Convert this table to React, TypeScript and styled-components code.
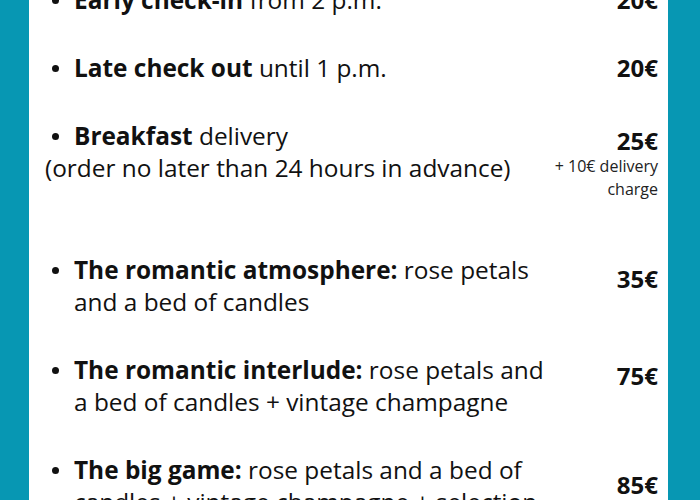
import styled, { createGlobalStyle } from "styled-components";

const GlobalStyle = createGlobalStyle`
  html, body {
    margin: 0;
    padding: 0;
    background: #0797b3;
  }
  body {
    font-family: "Open Sans", "Liberation Sans", sans-serif;
    color: #111111;
  }
`;

const Panel = styled.main`
  background: #ffffff;
  margin: 0 32px 0 29px;
  height: 500px;
  overflow: hidden;
  padding: 0 10px 0 16px;
  box-sizing: border-box;
`;

const Content = styled.div`
  display: flex;
  flex-direction: column;
  gap: 53px;
  margin-top: -16px;
`;

const Section = styled.section`
  display: flex;
  flex-direction: column;
  gap: 36px;
`;

const Row = styled.div`
  display: grid;
  grid-template-columns: 1fr 106px;
  align-items: start;
`;

const Description = styled.div`
  font-size: 24.4px;
  line-height: 32px;
`;

const Item = styled.p`
  position: relative;
  margin: 0;
  padding-left: 29px;

  &::before {
    content: "";
    position: absolute;
    left: 7px;
    top: 13px;
    width: 7px;
    height: 7px;
    border-radius: 50%;
    background: #111111;
  }

  b {
    font-weight: 700;
  }
`;

const Note = styled.p`
  margin: 0;
`;

const PriceBox = styled.div<{ $offset: number }>`
  padding-top: ${({ $offset }) => $offset}px;
  text-align: right;
`;

const Price = styled.div`
  font-weight: 700;
  font-size: 24px;
  line-height: 28px;
`;

const PriceNote = styled.div`
  font-size: 16px;
  line-height: 23px;
  color: #222222;
`;

type Extra = {
  bold: string;
  text: string;
  price: string;
  offset: number;
  note?: string;
  priceNote?: string;
};

const basics: Extra[] = [
  { bold: "Early check-in", text: " from 2 p.m.", price: "20€", offset: 2 },
  { bold: "Late check out", text: " until 1 p.m.", price: "20€", offset: 2 },
  {
    bold: "Breakfast",
    text: " delivery",
    price: "25€",
    offset: 7,
    note: "(order no later than 24 hours in advance)",
    priceNote: "+ 10€ delivery charge",
  },
];

const romance: Extra[] = [
  {
    bold: "The romantic atmosphere:",
    text: " rose petals and a bed of candles",
    price: "35€",
    offset: 11,
  },
  {
    bold: "The romantic interlude:",
    text: " rose petals and a bed of candles + vintage champagne",
    price: "75€",
    offset: 8,
  },
  {
    bold: "The big game:",
    text: " rose petals and a bed of candles + vintage champagne + selection of fine chocolates",
    price: "85€",
    offset: 17,
  },
];

const ExtraRow = ({ extra }: { extra: Extra }) => (
  <Row>
    <Description>
      <Item>
        <b>{extra.bold}</b>
        {extra.text}
      </Item>
      {extra.note && <Note>{extra.note}</Note>}
    </Description>
    <PriceBox $offset={extra.offset}>
      <Price>{extra.price}</Price>
      {extra.priceNote && <PriceNote>{extra.priceNote}</PriceNote>}
    </PriceBox>
  </Row>
);

const App = () => {
  return (
    <>
      <GlobalStyle />
      <Panel>
        <Content>
          <Section>
            {basics.map((e) => (
              <ExtraRow key={e.bold} extra={e} />
            ))}
          </Section>
          <Section>
            {romance.map((e) => (
              <ExtraRow key={e.bold} extra={e} />
            ))}
          </Section>
        </Content>
      </Panel>
    </>
  );
};

export default App;
